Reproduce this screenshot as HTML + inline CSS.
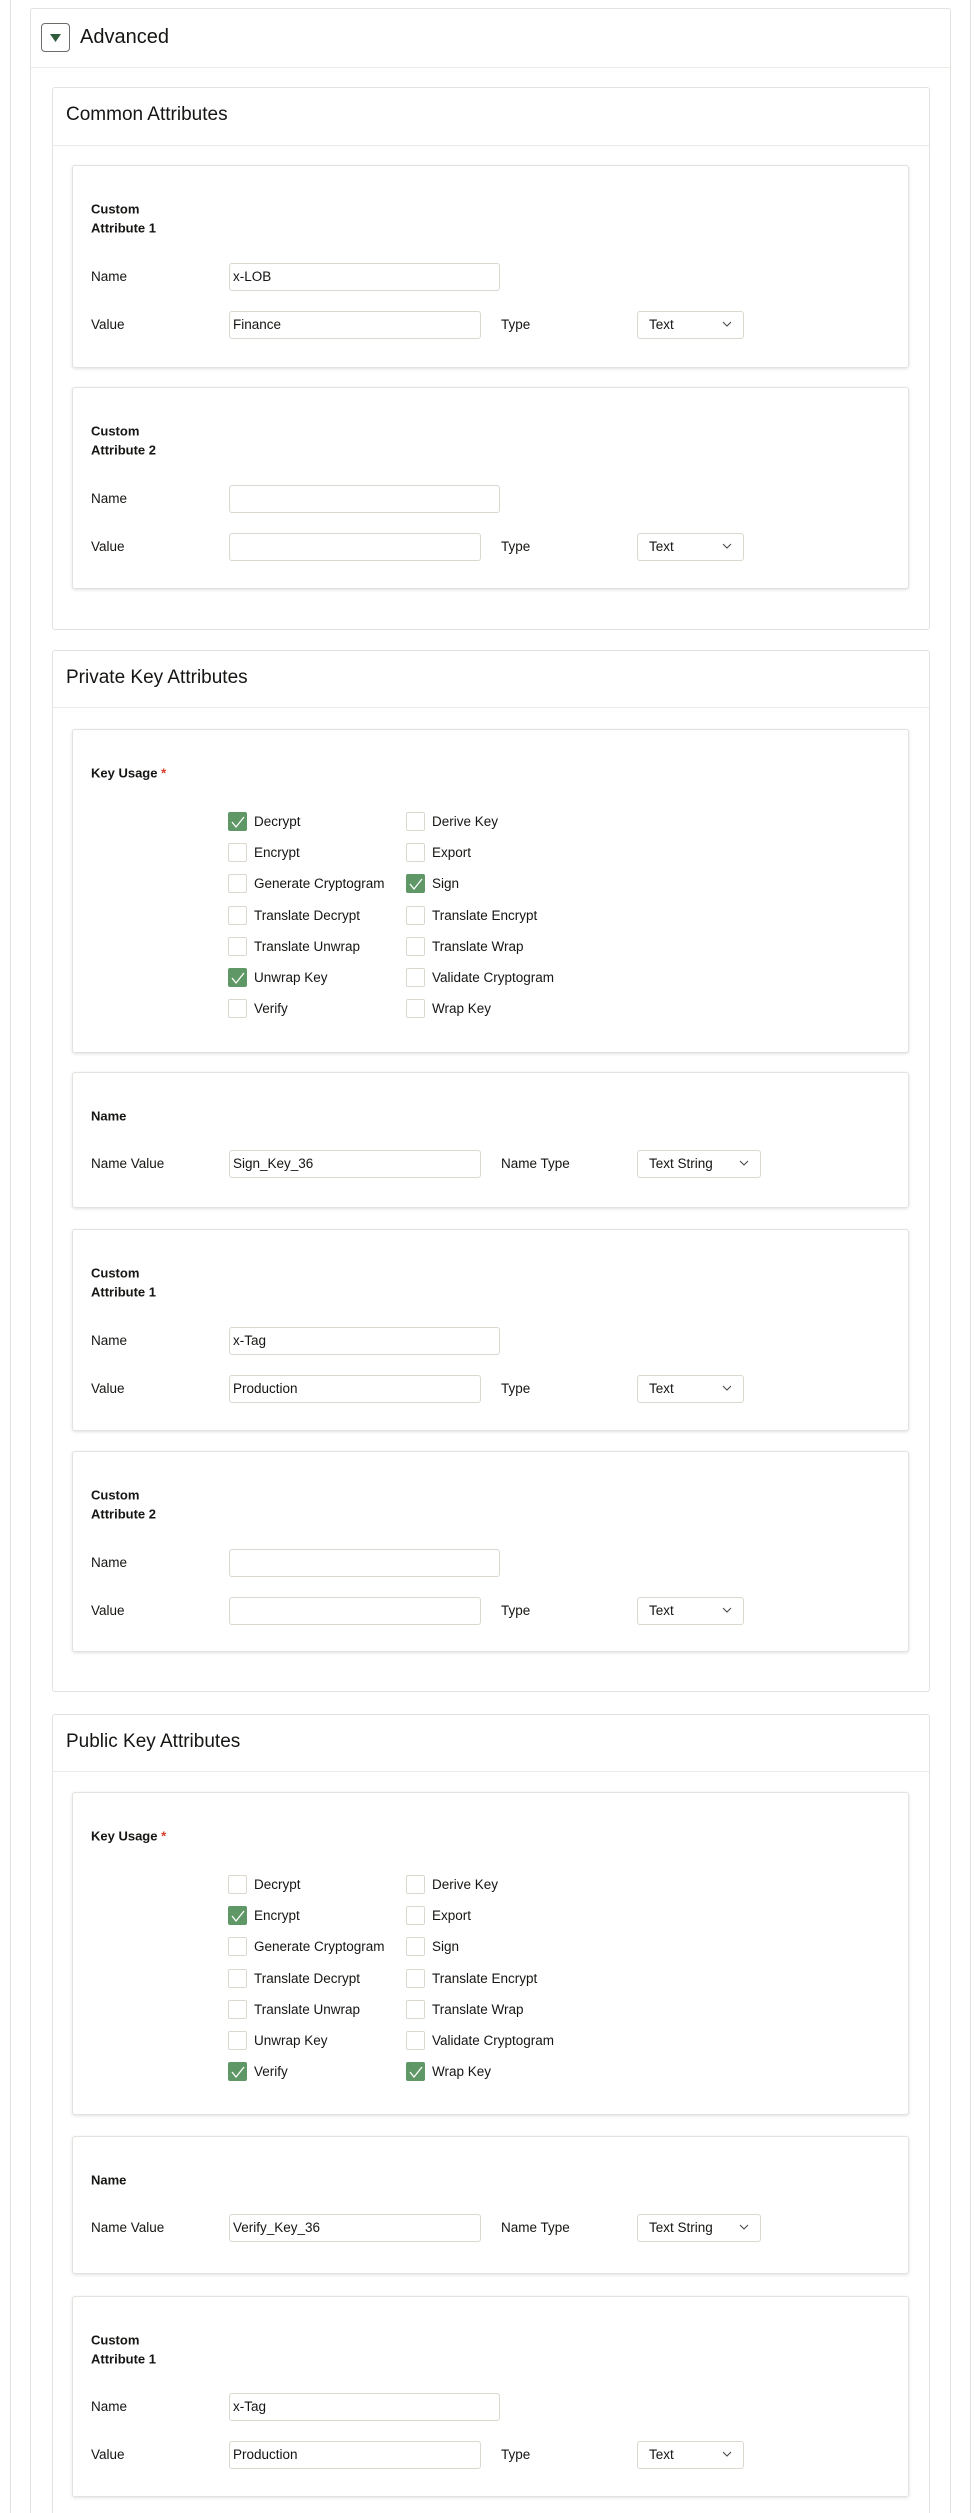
<!DOCTYPE html>
<html><head><meta charset="utf-8"><style>
*{box-sizing:border-box;margin:0;padding:0}
html,body{width:975px;height:2513px;overflow:hidden;background:#fff}
body{font-family:"Liberation Sans",sans-serif;color:#161513;position:relative}
.a{position:absolute}
.vl{position:absolute;top:0;height:2513px;width:1px;background:#e4e2de}
.panel{position:absolute;border:1px solid #e4e2de;border-radius:3px;background:#fff}
.ph{position:absolute;left:0;right:0;height:1px;background:#ecebe8}
.ptitle{position:absolute;left:13px;font-size:19px;line-height:24px}
.card{position:absolute;left:72px;width:837px;border:1px solid #e4e2de;border-radius:3px;background:#fff;box-shadow:0 1px 3px rgba(0,0,0,.12)}
.lbl{position:absolute;left:18px;font-size:13.5px;line-height:20px;transform:translateY(-50%)}
.b{font-weight:bold;font-size:13px;line-height:19px}
.in{position:absolute;height:28px;border:1px solid #dcd8d0;border-radius:3px;font-size:13.5px;line-height:26px;padding-left:3px}
.sel{position:absolute;height:28px;border:1px solid #dcd8d0;border-radius:3px;font-size:13.5px;line-height:26px;padding-left:11px}
.sel svg{position:absolute;right:11px;top:9px}
.cb{position:absolute;width:19px;height:19px;border:1px solid #dcd8d0;border-radius:2px;background:#fff}
.cb.on{background:#5f9766;border-color:#5f9766}
.cb.on svg{position:absolute;left:2px;top:2px}
.ct{position:absolute;font-size:13.5px;line-height:19px}
.req{color:#d63b25}
</style></head><body>
<div class="vl" style="left:10px"></div>
<div class="vl" style="left:970px"></div>
<div class="panel" style="left:30px;top:8px;width:921px;height:2560px">
  <div class="a" style="left:10px;top:14px;width:29px;height:29px;border:1px solid #6f6c68;border-radius:4px"><svg class="a" style="left:8px;top:10px" width="11" height="8"><path d="M0 0H11L5.5 8Z" fill="#2f5d3b"/></svg></div>
  <div class="a" style="left:49px;top:16px;font-size:20px;line-height:24px">Advanced</div>
  <div class="ph" style="top:58px"></div>
</div>

<div class="panel" style="left:52px;top:87px;width:878px;height:543px"><div class="ptitle" style="top:15px">Common Attributes</div><div class="ph" style="top:57px"></div></div>
<div class="panel" style="left:52px;top:650px;width:878px;height:1042px"><div class="ptitle" style="top:15px">Private Key Attributes</div><div class="ph" style="top:56px"></div></div>
<div class="panel" style="left:52px;top:1714px;width:878px;height:850px"><div class="ptitle" style="top:15px">Public Key Attributes</div><div class="ph" style="top:56px"></div></div>

<div class="card" style="top:165px;height:203px">
 <div class="lbl b" style="top:43px">Custom</div><div class="lbl b" style="top:62px">Attribute 1</div>
 <div class="lbl" style="top:111px">Name</div><div class="in" style="left:156px;top:97px;width:271px">x-LOB</div>
 <div class="lbl" style="top:159px">Value</div><div class="in" style="left:156px;top:145px;width:252px">Finance</div>
 <div class="lbl" style="left:428px;top:159px">Type</div><div class="sel" style="left:564px;top:145px;width:107px">Text<svg width="10" height="7"><path d="M1 1L5 5L9 1" stroke="#444" fill="none"/></svg></div>
</div>
<div class="card" style="top:387px;height:202px">
 <div class="lbl b" style="top:43px">Custom</div><div class="lbl b" style="top:62px">Attribute 2</div>
 <div class="lbl" style="top:111px">Name</div><div class="in" style="left:156px;top:97px;width:271px"></div>
 <div class="lbl" style="top:159px">Value</div><div class="in" style="left:156px;top:145px;width:252px"></div>
 <div class="lbl" style="left:428px;top:159px">Type</div><div class="sel" style="left:564px;top:145px;width:107px">Text<svg width="10" height="7"><path d="M1 1L5 5L9 1" stroke="#444" fill="none"/></svg></div>
</div>

<div class="card" style="top:729px;height:324px">
 <div class="lbl b" style="top:43px">Key Usage <span class="req">*</span></div>
 <div class="cb on" style="left:155px;top:82px"><svg width="14" height="14"><path d="M1 7L5 12L13 2" stroke="#fff" stroke-width="1.3" fill="none"/></svg></div><div class="ct" style="left:181px;top:82px">Decrypt</div>
 <div class="cb" style="left:333px;top:82px"></div><div class="ct" style="left:359px;top:82px">Derive Key</div>
 <div class="cb" style="left:155px;top:113px"></div><div class="ct" style="left:181px;top:113px">Encrypt</div>
 <div class="cb" style="left:333px;top:113px"></div><div class="ct" style="left:359px;top:113px">Export</div>
 <div class="cb" style="left:155px;top:144px"></div><div class="ct" style="left:181px;top:144px">Generate Cryptogram</div>
 <div class="cb on" style="left:333px;top:144px"><svg width="14" height="14"><path d="M1 7L5 12L13 2" stroke="#fff" stroke-width="1.3" fill="none"/></svg></div><div class="ct" style="left:359px;top:144px">Sign</div>
 <div class="cb" style="left:155px;top:176px"></div><div class="ct" style="left:181px;top:176px">Translate Decrypt</div>
 <div class="cb" style="left:333px;top:176px"></div><div class="ct" style="left:359px;top:176px">Translate Encrypt</div>
 <div class="cb" style="left:155px;top:207px"></div><div class="ct" style="left:181px;top:207px">Translate Unwrap</div>
 <div class="cb" style="left:333px;top:207px"></div><div class="ct" style="left:359px;top:207px">Translate Wrap</div>
 <div class="cb on" style="left:155px;top:238px"><svg width="14" height="14"><path d="M1 7L5 12L13 2" stroke="#fff" stroke-width="1.3" fill="none"/></svg></div><div class="ct" style="left:181px;top:238px">Unwrap Key</div>
 <div class="cb" style="left:333px;top:238px"></div><div class="ct" style="left:359px;top:238px">Validate Cryptogram</div>
 <div class="cb" style="left:155px;top:269px"></div><div class="ct" style="left:181px;top:269px">Verify</div>
 <div class="cb" style="left:333px;top:269px"></div><div class="ct" style="left:359px;top:269px">Wrap Key</div>
</div>
<div class="card" style="top:1072px;height:136px">
 <div class="lbl b" style="top:43px">Name</div>
 <div class="lbl" style="top:91px">Name Value</div><div class="in" style="left:156px;top:77px;width:252px">Sign_Key_36</div>
 <div class="lbl" style="left:428px;top:91px">Name Type</div><div class="sel" style="left:564px;top:77px;width:124px">Text String<svg width="10" height="7"><path d="M1 1L5 5L9 1" stroke="#444" fill="none"/></svg></div>
</div>
<div class="card" style="top:1229px;height:202px">
 <div class="lbl b" style="top:43px">Custom</div><div class="lbl b" style="top:62px">Attribute 1</div>
 <div class="lbl" style="top:111px">Name</div><div class="in" style="left:156px;top:97px;width:271px">x-Tag</div>
 <div class="lbl" style="top:159px">Value</div><div class="in" style="left:156px;top:145px;width:252px">Production</div>
 <div class="lbl" style="left:428px;top:159px">Type</div><div class="sel" style="left:564px;top:145px;width:107px">Text<svg width="10" height="7"><path d="M1 1L5 5L9 1" stroke="#444" fill="none"/></svg></div>
</div>
<div class="card" style="top:1451px;height:201px">
 <div class="lbl b" style="top:43px">Custom</div><div class="lbl b" style="top:62px">Attribute 2</div>
 <div class="lbl" style="top:111px">Name</div><div class="in" style="left:156px;top:97px;width:271px"></div>
 <div class="lbl" style="top:159px">Value</div><div class="in" style="left:156px;top:145px;width:252px"></div>
 <div class="lbl" style="left:428px;top:159px">Type</div><div class="sel" style="left:564px;top:145px;width:107px">Text<svg width="10" height="7"><path d="M1 1L5 5L9 1" stroke="#444" fill="none"/></svg></div>
</div>

<div class="card" style="top:1792px;height:323px">
 <div class="lbl b" style="top:43px">Key Usage <span class="req">*</span></div>
 <div class="cb" style="left:155px;top:82px"></div><div class="ct" style="left:181px;top:82px">Decrypt</div>
 <div class="cb" style="left:333px;top:82px"></div><div class="ct" style="left:359px;top:82px">Derive Key</div>
 <div class="cb on" style="left:155px;top:113px"><svg width="14" height="14"><path d="M1 7L5 12L13 2" stroke="#fff" stroke-width="1.3" fill="none"/></svg></div><div class="ct" style="left:181px;top:113px">Encrypt</div>
 <div class="cb" style="left:333px;top:113px"></div><div class="ct" style="left:359px;top:113px">Export</div>
 <div class="cb" style="left:155px;top:144px"></div><div class="ct" style="left:181px;top:144px">Generate Cryptogram</div>
 <div class="cb" style="left:333px;top:144px"></div><div class="ct" style="left:359px;top:144px">Sign</div>
 <div class="cb" style="left:155px;top:176px"></div><div class="ct" style="left:181px;top:176px">Translate Decrypt</div>
 <div class="cb" style="left:333px;top:176px"></div><div class="ct" style="left:359px;top:176px">Translate Encrypt</div>
 <div class="cb" style="left:155px;top:207px"></div><div class="ct" style="left:181px;top:207px">Translate Unwrap</div>
 <div class="cb" style="left:333px;top:207px"></div><div class="ct" style="left:359px;top:207px">Translate Wrap</div>
 <div class="cb" style="left:155px;top:238px"></div><div class="ct" style="left:181px;top:238px">Unwrap Key</div>
 <div class="cb" style="left:333px;top:238px"></div><div class="ct" style="left:359px;top:238px">Validate Cryptogram</div>
 <div class="cb on" style="left:155px;top:269px"><svg width="14" height="14"><path d="M1 7L5 12L13 2" stroke="#fff" stroke-width="1.3" fill="none"/></svg></div><div class="ct" style="left:181px;top:269px">Verify</div>
 <div class="cb on" style="left:333px;top:269px"><svg width="14" height="14"><path d="M1 7L5 12L13 2" stroke="#fff" stroke-width="1.3" fill="none"/></svg></div><div class="ct" style="left:359px;top:269px">Wrap Key</div>
</div>
<div class="card" style="top:2136px;height:138px">
 <div class="lbl b" style="top:43px">Name</div>
 <div class="lbl" style="top:91px">Name Value</div><div class="in" style="left:156px;top:77px;width:252px">Verify_Key_36</div>
 <div class="lbl" style="left:428px;top:91px">Name Type</div><div class="sel" style="left:564px;top:77px;width:124px">Text String<svg width="10" height="7"><path d="M1 1L5 5L9 1" stroke="#444" fill="none"/></svg></div>
</div>
<div class="card" style="top:2296px;height:201px">
 <div class="lbl b" style="top:43px">Custom</div><div class="lbl b" style="top:62px">Attribute 1</div>
 <div class="lbl" style="top:110px">Name</div><div class="in" style="left:156px;top:96px;width:271px">x-Tag</div>
 <div class="lbl" style="top:158px">Value</div><div class="in" style="left:156px;top:144px;width:252px">Production</div>
 <div class="lbl" style="left:428px;top:158px">Type</div><div class="sel" style="left:564px;top:144px;width:107px">Text<svg width="10" height="7"><path d="M1 1L5 5L9 1" stroke="#444" fill="none"/></svg></div>
</div>
</body></html>
